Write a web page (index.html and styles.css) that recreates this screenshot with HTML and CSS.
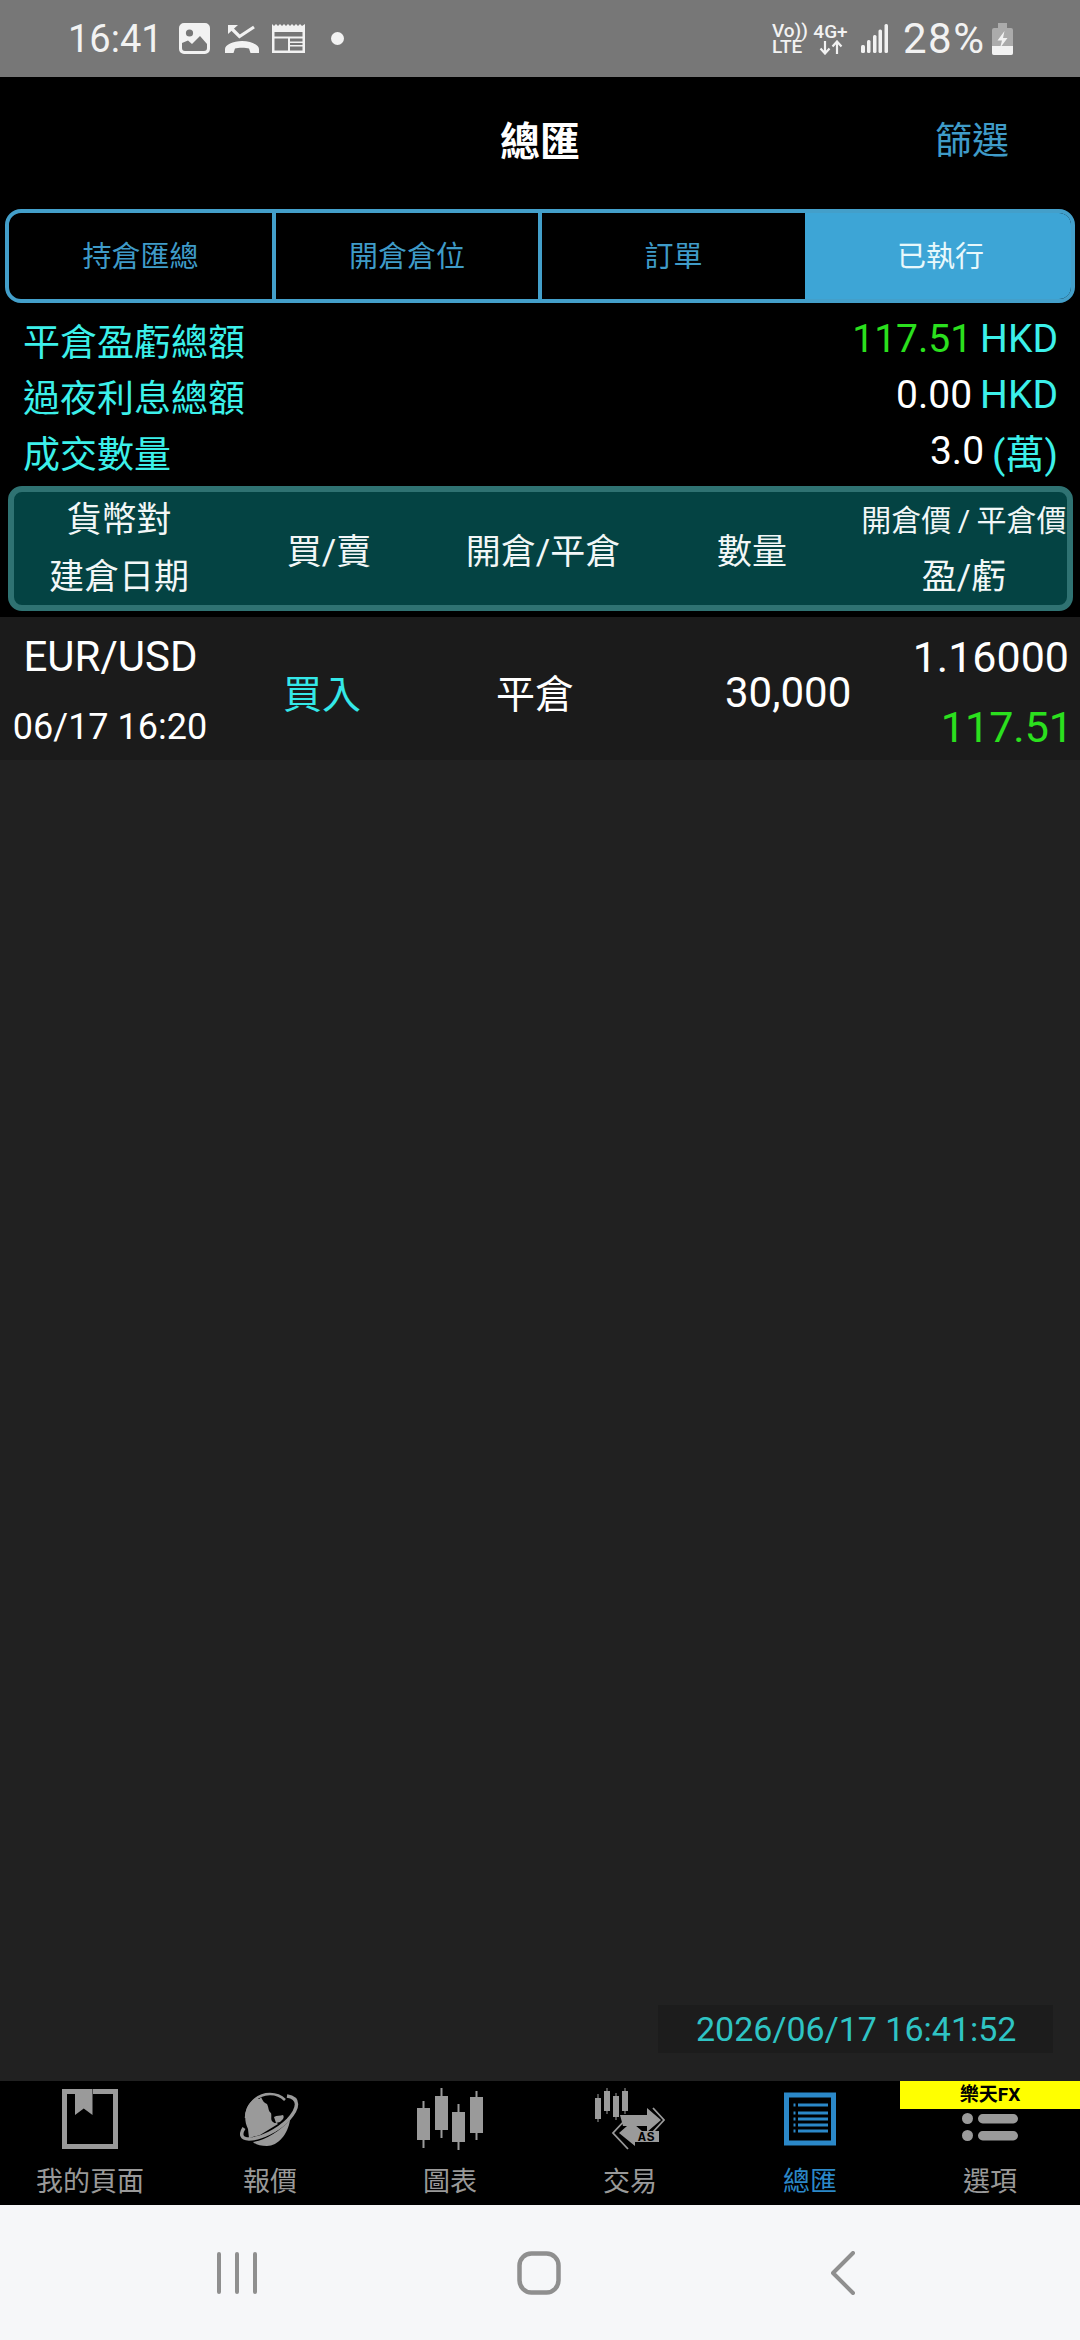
FILE: index.html
```html
<!DOCTYPE html>
<html lang="zh-Hant">
<head>
    <meta charset="UTF-8">
    <meta name="viewport" content="width=device-width, initial-scale=1.0">
    <title>總匯</title>
    <link rel="stylesheet" href="styles.css">
</head>
<body>
    <div class="page">
        <!-- Status bar -->
        <div class="status-bar">
            <div class="status-left">
                <span class="clock">16:41</span>
                <svg class="st-gallery" width="31" height="31" viewBox="0 0 31 31">
                    <path fill="#f2f2f2" fill-rule="evenodd" d="M5 0H26A5 5 0 0 1 31 5V26A5 5 0 0 1 26 31H5A5 5 0 0 1 0 26V5A5 5 0 0 1 5 0ZM3 20V25A3 3 0 0 0 6 28H25A3 3 0 0 0 28 25V21L21 13L13 21L9 17.500Z"/>
                    <circle cx="10.500" cy="10" r="3.600" fill="#777"/>
                </svg>
                <svg class="st-call" width="34" height="29" viewBox="0 0 34 29">
                    <path fill="#f2f2f2" d="M0 29V25C0 21 8 17 17 17S34 21 34 25V29H25.500L24 24.500C21 23.500 13 23.500 10 24.500L8.500 29Z"/>
                    <path fill="none" stroke="#f2f2f2" stroke-width="3.200" d="M6 4L14.500 12.500L29 3"/>
                    <path fill="#f2f2f2" d="M3 1H13L3 10Z"/>
                </svg>
                <svg class="st-cal" width="33" height="29" viewBox="0 0 33 29">
                    <path fill="#f2f2f2" fill-rule="evenodd" d="M0 0L2 2L4 0L6 2L8 0L10 2L12 0L14 2L16 0L18 2L20 0L22 2L24 0L26 2L28 0L30 2L33 0V29H0ZM2.500 8V26.500H30.500V8Z"/>
                    <path fill="#f2f2f2" d="M2 12.500H31V14.500H2ZM16 14H18V27H16ZM18 17.500H31V19H18ZM18 21H31V22.500H18Z"/>
                </svg>
                <span class="st-dot"></span>
            </div>
            <div class="status-right">
                <div class="st-volte">Vo))<br>LTE</div>
                <div class="st-net">
                    <span>4G+</span>
                    <svg width="24" height="15" viewBox="0 0 24 15">
                        <path fill="none" stroke="#f2f2f2" stroke-width="2.200" d="M6 1V13M1.500 8.500L6 13.500L10.500 8.500M18 14V2M13.500 6.500L18 1.500L22.500 6.500"/>
                    </svg>
                </div>
                <svg class="st-signal" width="27" height="29" viewBox="0 0 27 29">
                    <rect x="0" y="21" width="4" height="8" rx="1.500" fill="#f2f2f2"/>
                    <rect x="6" y="16" width="3.500" height="13" rx="1.500" fill="#f2f2f2"/>
                    <rect x="12" y="11" width="3.500" height="18" rx="1.500" fill="#f2f2f2"/>
                    <rect x="17.500" y="5.500" width="3.500" height="23.500" rx="1.500" fill="#f2f2f2"/>
                    <rect x="23.500" y="0" width="3.500" height="29" rx="1.500" fill="#f2f2f2"/>
                </svg>
                <span class="battery-text">28%</span>
                <svg class="st-battery" width="21" height="32" viewBox="0 0 21 32">
                    <path fill="#ababab" d="M6 0H15V5H19A2 2 0 0 1 21 7V30A2 2 0 0 1 19 32H2A2 2 0 0 1 0 30V7A2 2 0 0 1 2 5H6Z"/>
                    <path fill="#f2f2f2" d="M0 23H21V30A2 2 0 0 1 19 32H2A2 2 0 0 1 0 30Z"/>
                    <path fill="#f2f2f2" d="M12.500 8L5.500 17.500H10L8 25L15.500 15H11Z"/>
                </svg>
            </div>
        </div>

        <!-- Title -->
        <div class="app-header">
            <h2>總匯</h2>
            <span class="filter-link">篩選</span>
        </div>

        <!-- Tabs -->
        <div class="tabs">
            <div class="tab">持倉匯總</div>
            <div class="tab">開倉倉位</div>
            <div class="tab">訂單</div>
            <div class="tab active">已執行</div>
        </div>

        <!-- Totals -->
        <div class="totals">
            <div class="total-row">
                <span>平倉盈虧總額</span>
                <span class="total-value"><span class="green">117.51</span><span class="unit">HKD</span></span>
            </div>
            <div class="total-row">
                <span>過夜利息總額</span>
                <span class="total-value"><span class="white">0.00</span><span class="unit">HKD</span></span>
            </div>
            <div class="total-row">
                <span>成交數量</span>
                <span class="total-value"><span class="white">3.0</span><span class="unit">(萬)</span></span>
            </div>
        </div>

        <!-- Table head -->
        <div class="table-head">
            <div class="col-pair">
                <span>貨幣對</span>
                <span>建倉日期</span>
            </div>
            <div class="col-side">買/賣</div>
            <div class="col-open">開倉/平倉</div>
            <div class="col-qty">數量</div>
            <div class="col-price">
                <span class="small">開倉價 / 平倉價</span>
                <span>盈/虧</span>
            </div>
        </div>

        <div class="content">
            <div class="trade-row">
                <div class="cell-pair">
                    <span class="pair-name">EUR/USD</span>
                    <span class="pair-date">06/17 16:20</span>
                </div>
                <div class="cell-side">買入</div>
                <div class="cell-open">平倉</div>
                <div class="cell-qty">30,000</div>
                <div class="cell-price">
                    <span>1.16000</span>
                    <span class="green pl">117.51</span>
                </div>
            </div>
            <div class="timestamp">2026/06/17 16:41:52</div>
        </div>

        <!-- Bottom menu -->
        <div class="bottom-nav">
            <div class="nav-item">
                <svg width="56" height="60" viewBox="0 0 56 60">
                    <path fill="none" stroke="#9a9a9a" stroke-width="5" d="M13 2.500H2.500V57.500H53.500V2.500H31"/>
                    <path fill="#9a9a9a" d="M13 0H30.500V26L21.750 19.500L13 26Z"/>
                </svg>
                <span>我的頁面</span>
            </div>
            <div class="nav-item">
                <svg width="60" height="56" viewBox="0 0 60 56">
                    <path fill="#9a9a9a" d="M8 38C3 28 5 16 12 10C14 8 16 9 17 7C18 9 20 8 21 6C23 10 24 12 27 13C29 17 28 20 31 22C32 26 30 29 33 31C35 33 37 31 38 33L20 44L9 47Z"/>
                    <path fill="#9a9a9a" d="M34 26C37 24 40 25 43 24C45 27 42 29 40 31L36 32Z"/>
                    <path fill="none" stroke="#9a9a9a" stroke-width="2.500" d="M6 27C6 14 17 3 30 3C36 3 41 5 45 9"/>
                    <path fill="none" stroke="#9a9a9a" stroke-width="3.500" d="M47 5C60 7 59 17 48 29C38 39 21 48 9 48C1 48 0 43 4 37"/>
                    <path fill="#9a9a9a" d="M50 29C48 43 38 55 27 55C21 55 16 54 13 51C26 49 40 40 50 29Z"/>
                </svg>
                <span>報價</span>
            </div>
            <div class="nav-item">
                <svg width="66" height="62" viewBox="0 0 66 62">
                    <path fill="#9a9a9a" d="M0 20H13V52H0ZM5.500 13H7.500V60H5.500ZM18 8H31V42H18ZM23.500 0H25.500V50H23.500ZM35 24H48V54H35ZM40.500 16H42.500V62H40.500ZM53 9H66V45H53ZM58.500 3H60.500V52H58.500Z"/>
                </svg>
                <span>圖表</span>
            </div>
            <div class="nav-item">
                <svg width="70" height="62" viewBox="0 0 70 62">
                    <path fill="#9a9a9a" d="M0 10H6V31H0ZM2.500 6H3.500V34H2.500ZM9 3H15V23H9ZM11.500 0H12.500V26H11.500ZM18 8H24V29H18ZM20.500 5H21.500V32H20.500ZM27 3H33V23H27ZM29.500 0H30.500V26H29.500Z"/>
                    <path fill="#9a9a9a" d="M25 27H52V20L66 32L52 44V38H28Z"/>
                    <path fill="none" stroke="#9a9a9a" stroke-width="1.800" d="M58 20L69 32L58 44"/>
                    <path fill="#9a9a9a" d="M40 37V31L24 45L40 58V54H64V43H47Z"/>
                    <path fill="none" stroke="#9a9a9a" stroke-width="1.800" d="M31 31L18 45L33 61"/>
                    <text x="43" y="53" class="trade-as">AS</text>
                </svg>
                <span>交易</span>
            </div>
            <div class="nav-item current">
                <svg width="52" height="53" viewBox="0 0 52 53">
                    <path fill="none" stroke="#2b88c8" stroke-width="5" d="M2.500 2.500H49.500V50.500H2.500Z"/>
                    <path fill="#2b88c8" d="M14 11H44V14H14ZM14 19H44V22H14ZM14 25H44V28H14ZM14 31H44V34H14ZM14 37H44V40H14ZM9.500 11H11.500V14H9.500ZM9.500 19H11.500V22H9.500ZM9.500 25H11.500V28H9.500ZM9.500 31H11.500V34H9.500ZM9.500 37H11.500V40H9.500Z"/>
                </svg>
                <span>總匯</span>
            </div>
            <div class="nav-item">
                <svg class="options-icon" width="56" height="28" viewBox="0 0 56 28">
                    <circle cx="5.500" cy="5.500" r="5.500" fill="#9a9a9a"/>
                    <circle cx="5.500" cy="22.500" r="5.500" fill="#9a9a9a"/>
                    <rect x="16" y="1" width="40" height="9.500" rx="4.700" fill="#9a9a9a"/>
                    <rect x="16" y="18" width="40" height="9.500" rx="4.700" fill="#9a9a9a"/>
                </svg>
                <span>選項</span>
                <div class="brand-badge">樂天FX</div>
            </div>
        </div>

        <!-- Android navigation bar -->
        <div class="system-nav">
            <svg width="40" height="42" viewBox="0 0 40 42">
                <path fill="none" stroke="#8f8f8f" stroke-width="4" stroke-linecap="round" d="M2 2V40M20 2V40M38 2V40"/>
            </svg>
            <svg class="home-btn" width="44" height="44" viewBox="0 0 44 44">
                <rect x="2.500" y="2.500" width="39" height="39" rx="12" fill="none" stroke="#8f8f8f" stroke-width="4.500"/>
            </svg>
            <svg width="24" height="44" viewBox="0 0 24 44">
                <path fill="none" stroke="#8f8f8f" stroke-width="4" stroke-linecap="round" stroke-linejoin="round" d="M22 2L2 22L22 42"/>
            </svg>
        </div>
    </div>
</body>
</html>
```

FILE: styles.css
```css
body {
    margin: 0;
    padding: 0;
    background-color: #000;
    font-family: Roboto, "Noto Sans CJK TC", sans-serif;
    color: #fff;
}

.page {
    width: 1080px;
    height: 2340px;
    display: flex;
    flex-direction: column;
    overflow: hidden;
}

/* status bar */
.status-bar {
    height: 77px;
    flex-shrink: 0;
    background-color: #777;
    color: #f2f2f2;
    display: flex;
    align-items: center;
    justify-content: space-between;
    padding: 0 67px 0 68px;
    box-sizing: border-box;
}

.status-left,
.status-right {
    display: flex;
    align-items: center;
}

.clock {
    font-size: 38px;
    width: 111px;
    line-height: 42px;
    margin-top: 1px;
}

.st-call {
    margin-left: 15px;
}

.st-cal {
    margin-left: 13px;
}

.st-dot {
    width: 13px;
    height: 13px;
    border-radius: 50%;
    background-color: #f2f2f2;
    margin-left: 26px;
}

.st-volte {
    font-size: 19px;
    font-weight: 500;
    line-height: 16px;
    width: 30px;
    white-space: nowrap;
}

.st-net {
    display: flex;
    flex-direction: column;
    align-items: center;
    font-size: 19px;
    font-weight: 500;
    line-height: 17px;
    width: 33px;
    margin-left: 12px;
}

.st-signal {
    margin-left: 14px;
}

.battery-text {
    font-size: 42px;
    line-height: 42px;
    letter-spacing: 1.500px;
    margin-left: 15px;
    width: 81px;
    white-space: nowrap;
}

.st-battery {
    margin-left: 8px;
}

/* title */
.app-header {
    height: 132px;
    flex-shrink: 0;
    background-color: #000;
    position: relative;
    display: flex;
    align-items: center;
    justify-content: center;
}

.app-header h2 {
    margin: 0;
    font-size: 40px;
    font-weight: 700;
    margin-top: -8px;
}

.filter-link {
    position: absolute;
    left: 935px;
    top: 40px;
    font-size: 37px;
    line-height: 50px;
    color: #3f9bc8;
}

/* tabs */
.tabs {
    height: 94px;
    flex-shrink: 0;
    margin: 0 5px;
    border: 4px solid #439fca;
    border-radius: 16px;
    box-sizing: border-box;
    display: grid;
    grid-template-columns: 267px 266px 263px 1fr;
    overflow: hidden;
}

.tab {
    display: flex;
    align-items: center;
    justify-content: center;
    font-size: 29px;
    padding-bottom: 5px;
    box-sizing: border-box;
    color: #3f9bc8;
    border-right: 4px solid #439fca;
}

.tab:nth-child(3) {
    border-right: none;
}

.tab.active {
    background-color: #3da5d6;
    color: #e8f8fb;
    border-right: none;
    padding-left: 5px;
}

/* totals */
.totals {
    height: 183px;
    flex-shrink: 0;
    padding: 9px 22px 0 23px;
    box-sizing: border-box;
    color: #3cf0ea;
    font-size: 37px;
}

.total-row {
    height: 56px;
    display: flex;
    align-items: center;
    justify-content: space-between;
}

.total-value {
    font-size: 39px;
    display: flex;
    align-items: center;
    margin-top: -2px;
}

.unit {
    margin-left: 8px;
}

.green {
    color: #2be01e;
}

.white {
    color: #fff;
}

/* table head */
.table-head {
    height: 125px;
    flex-shrink: 0;
    margin: 0 7px 6px 8px;
    border: 6px solid #2f7272;
    border-radius: 14px;
    background-color: #044343;
    box-sizing: border-box;
    display: grid;
    grid-template-columns: 222px 186px 242px 176px 1fr;
    align-items: center;
    text-align: center;
    font-size: 35px;
    color: #f2f7f7;
}

.col-pair,
.col-price {
    display: flex;
    flex-direction: column;
    gap: 14px;
    line-height: 43px;
}

.col-pair {
    margin-left: -12px;
}

.col-price {
    padding-left: 21px;
}

.col-price .small {
    font-size: 30px;
    white-space: nowrap;
    word-spacing: -1px;
}

/* content */
.content {
    flex: 1;
    background-color: #212121;
    display: flex;
    flex-direction: column;
}

.trade-row {
    height: 143px;
    background-color: #1b1b1b;
    padding-top: 6px;
    box-sizing: border-box;
    display: grid;
    grid-template-columns: 220px 170px 200px 170px 1fr;
    align-items: center;
    font-size: 42px;
}

.cell-pair {
    display: flex;
    flex-direction: column;
    align-items: center;
    gap: 22px;
    line-height: 48px;
}

.pair-name {
    font-size: 42px;
    margin-left: 1px;
}

.pair-date {
    font-size: 36px;
}

.cell-side {
    color: #34e8e8;
    font-size: 39px;
    padding-left: 63px;
    margin-top: -2px;
}

.cell-open {
    font-size: 39px;
    padding-left: 106px;
    margin-top: -2px;
}

.cell-qty {
    padding-left: 135px;
    white-space: nowrap;
    margin-top: 1px;
}

.cell-price {
    display: flex;
    flex-direction: column;
    align-items: flex-end;
    gap: 22px;
    font-size: 43px;
    line-height: 48px;
    padding-right: 11px;
}

.cell-price .pl {
    margin-right: -4px;
}

.timestamp {
    margin: auto 27px 28px auto;
    width: 395px;
    height: 48px;
    line-height: 48px;
    background-color: #1c1c1c;
    color: #2fc4c4;
    font-size: 34px;
    box-sizing: border-box;
    padding-left: 38px;
}

/* bottom menu */
.bottom-nav {
    height: 124px;
    flex-shrink: 0;
    background-color: #000;
    display: grid;
    grid-template-columns: repeat(6, 1fr);
}

.nav-item {
    position: relative;
    display: flex;
    flex-direction: column;
    align-items: center;
    color: #999;
    font-size: 27px;
    padding-top: 7px;
    box-sizing: border-box;
    height: 124px;
}

.nav-item svg {
    height: 62px;
    flex-shrink: 0;
}

.nav-item span {
    position: absolute;
    bottom: 6px;
    line-height: 34px;
}

.nav-item.current {
    color: #2b88c8;
}

.options-icon {
    margin-top: 8px;
}

.trade-as {
    font-family: "Liberation Mono", monospace;
    font-size: 13px;
    font-weight: 700;
    letter-spacing: 1px;
    fill: #000;
}

.brand-badge {
    position: absolute;
    top: 0;
    left: 0;
    right: 0;
    height: 28px;
    line-height: 28px;
    background-color: #ffff00;
    color: #000;
    font-size: 19px;
    font-weight: 700;
    text-align: center;
}

/* android nav bar */
.system-nav {
    height: 135px;
    flex-shrink: 0;
    background-color: #f6f7f9;
    display: flex;
    align-items: center;
    padding: 0 225px 0 217px;
    justify-content: space-between;
}

.home-btn {
    margin-left: -10px;
}
```
